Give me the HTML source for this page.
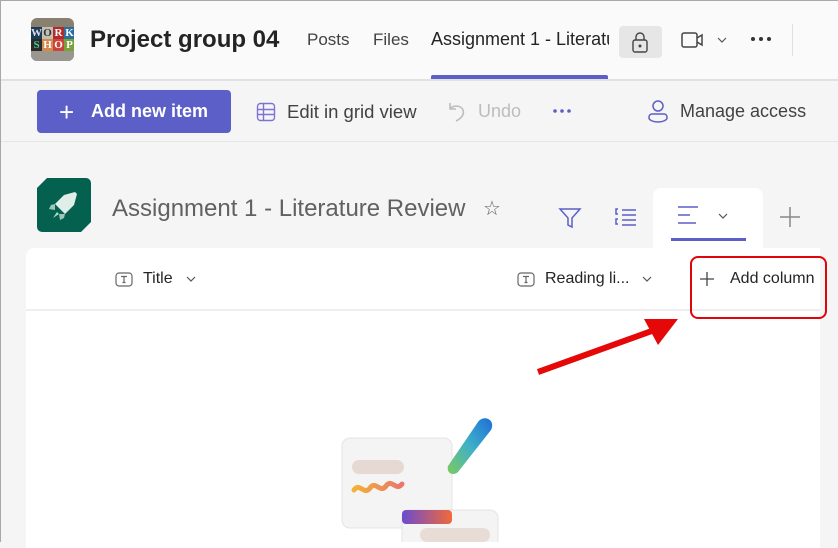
<!DOCTYPE html>
<html><head><meta charset="utf-8"><style>
*{box-sizing:border-box;margin:0;padding:0}
body{width:838px;height:542px;overflow:hidden;background:#f5f5f5;font-family:"Liberation Sans",sans-serif;position:relative;color:#242424}
.frame{position:absolute;inset:0;border:1px solid #a8a8a8;border-right:none;border-bottom:none;pointer-events:none;z-index:10}
.hdr{position:absolute;left:0;top:0;width:838px;height:81px;background:#fafafa;border-bottom:2px solid #e1e1e1}
.abs{position:absolute;white-space:nowrap}
.logo{left:31px;top:18px;width:43px;height:43px;border-radius:6px;overflow:hidden;background:#8a8070}
.logo div{position:absolute;width:11px;height:12px;font:bold 11px "Liberation Serif",serif;text-align:center;line-height:12px}
.tb{top:82px;left:0;width:838px;height:60px;border-bottom:1px solid #e6e6e6;background:#f5f5f5}
.btn{left:37px;top:90px;width:194px;height:43px;background:#5b5fc7;border-radius:4px;color:#fff;font-size:18px;font-weight:bold}
.card{left:26px;top:248px;width:794px;height:300px;background:#fff;border-radius:8px 0 0 0}
</style></head><body>
<div class="hdr"></div>
<div class="abs logo">
<div style="left:0;top:9px;background:#1c3b55;color:#dde">W</div>
<div style="left:11px;top:9px;background:#c3bfb5;color:#333">O</div>
<div style="left:22px;top:9px;background:#b22a2a;color:#fff">R</div>
<div style="left:33px;top:9px;background:#2a6fa0;color:#fff">K</div>
<div style="left:0;top:21px;background:#2a2a2a;color:#4c9">S</div>
<div style="left:11px;top:21px;background:#d5894a;color:#fff">H</div>
<div style="left:22px;top:21px;background:#c9443a;color:#fff">O</div>
<div style="left:33px;top:21px;background:#7aa23a;color:#fff">P</div>
<div style="left:0;top:33px;width:43px;height:10px;background:#9a9690"></div>
</div>
<div class="abs" style="left:90px;top:26px;font-size:24px;font-weight:bold;color:#242424">Project group 04</div>
<div class="abs" style="left:307px;top:30px;font-size:17px;color:#424242">Posts</div>
<div class="abs" style="left:373px;top:30px;font-size:17px;color:#424242">Files</div>
<div class="abs" style="left:431px;top:29px;font-size:18px;color:#242424;width:178px;overflow:hidden">Assignment 1 - Literature</div>
<div class="abs" style="left:431px;top:75px;width:177px;height:4px;background:#5b5fc7;border-radius:2px 2px 0 0"></div>
<div class="abs" style="left:619px;top:26px;width:43px;height:32px;background:#e6e6e6;border-radius:4px"></div>
<svg class="abs" style="left:628px;top:30px" width="24" height="24" viewBox="0 0 24 24" fill="none" stroke="#444" stroke-width="1.4"><rect x="5" y="10" width="14" height="12" rx="2"/><path d="M8 10V7a4 4 0 0 1 8 0v3"/><circle cx="12" cy="16" r=".8" fill="#444"/></svg>
<svg class="abs" style="left:680px;top:30px" width="26" height="20" viewBox="0 0 26 20" fill="none" stroke="#444" stroke-width="1.5"><rect x="2" y="3" width="15" height="14" rx="2"/><path d="M17 8l5-3v10l-5-3"/></svg>
<svg class="abs" style="left:716px;top:36px" width="12" height="8" viewBox="0 0 12 8" fill="none" stroke="#555" stroke-width="1.2"><path d="M2 2l4 4 4-4"/></svg>
<svg class="abs" style="left:750px;top:36px" width="22" height="6" viewBox="0 0 22 6" fill="#333"><circle cx="3" cy="3" r="2"/><circle cx="11" cy="3" r="2"/><circle cx="19" cy="3" r="2"/></svg>
<div class="abs" style="left:792px;top:24px;width:1px;height:32px;background:#e0e0e0"></div>

<div class="abs tb"></div>
<div class="abs btn"><span style="position:absolute;left:22px;top:7px;font-size:26px;font-weight:normal">+</span><span style="position:absolute;left:54px;top:11px">Add new item</span></div>
<svg class="abs" style="left:256px;top:102px" width="20" height="20" viewBox="0 0 20 20" fill="none" stroke="#7f72d6" stroke-width="1.4"><rect x="1.5" y="1.5" width="17" height="17" rx="3"/><path d="M1.5 7.5h17M1.5 12.5h17M7.5 1.5v17"/></svg>
<div class="abs" style="left:287px;top:101px;font-size:18.5px;color:#424242">Edit in grid view</div>
<svg class="abs" style="left:446px;top:100px" width="22" height="24" viewBox="0 0 22 24" fill="none" stroke="#bdbdbd" stroke-width="1.6"><path d="M4 3v6h6"/><path d="M4 9c3-4 11-4 13 1s-3 9-7 11"/></svg>
<div class="abs" style="left:478px;top:101px;font-size:18px;color:#bdbdbd">Undo</div>
<svg class="abs" style="left:552px;top:108px" width="20" height="6" viewBox="0 0 20 6" fill="#5b5fc7"><circle cx="3" cy="3" r="1.8"/><circle cx="10" cy="3" r="1.8"/><circle cx="17" cy="3" r="1.8"/></svg>
<svg class="abs" style="left:647px;top:99px" width="22" height="25" viewBox="0 0 22 25" fill="none" stroke="#5b5fc7" stroke-width="1.5"><circle cx="11" cy="7" r="5"/><path d="M2 18a3 3 0 0 1 3-3h12a3 3 0 0 1 3 3v1c0 2-4 4-9 4s-9-2-9-4z"/></svg>
<div class="abs" style="left:680px;top:101px;font-size:18px;color:#424242">Manage access</div>

<svg class="abs" style="left:37px;top:178px" width="54" height="54" viewBox="0 0 54 54"><path d="M10 0h39a5 5 0 0 1 5 5v39l-10 10H5a5 5 0 0 1-5-5V10z" fill="#05614f"/><path d="M38 14l-11 3-9 9 10 10 9-9 3-11z" fill="#dfeee8"/><path d="M18 26l-4 1-2 4 6 1zM28 36l-1 4-4 2-1-6z" fill="#9cc7b9"/><path d="M20 34l-4 6 6-4z" fill="#b5d6cb"/></svg>
<div class="abs" style="left:112px;top:195px;font-size:24px;color:#616161">Assignment 1 - Literature Review</div>
<div class="abs" style="left:483px;top:196px;font-size:20px;color:#616161">☆</div>
<svg class="abs" style="left:558px;top:207px" width="24" height="22" viewBox="0 0 24 22" fill="none" stroke="#5b5fc7" stroke-width="1.5"><path d="M2 2h20l-8 9v9l-4-2v-7z"/></svg>
<svg class="abs" style="left:615px;top:207px" width="22" height="20" viewBox="0 0 22 20" fill="none" stroke="#5b5fc7" stroke-width="1.5"><path d="M3 2H1v5h2M3 12H1v5h2M7 3h14M7 8h14M7 13h14M7 18h14"/></svg>
<div class="abs" style="left:653px;top:188px;width:110px;height:62px;background:#fff;border-radius:8px 8px 0 0"></div>
<svg class="abs" style="left:677px;top:205px" width="24" height="20" viewBox="0 0 24 20" fill="none" stroke="#5b5fc7" stroke-width="1.5"><path d="M1 2h20M1 10h12M1 18h18"/></svg>
<svg class="abs" style="left:717px;top:212px" width="12" height="8" viewBox="0 0 12 8" fill="none" stroke="#555" stroke-width="1.2"><path d="M2 2l4 4 4-4"/></svg>
<div class="abs" style="left:671px;top:238px;width:75px;height:3px;background:#5b5fc7"></div>
<svg class="abs" style="left:779px;top:206px" width="22" height="22" viewBox="0 0 22 22" stroke="#888" stroke-width="1.5"><path d="M11 1v20M1 11h20"/></svg>

<div class="abs card"></div>
<div class="abs" style="left:26px;top:309px;width:794px;height:2px;background:#eeeeee"></div>
<svg class="abs" style="left:115px;top:272px" width="18" height="15" viewBox="0 0 18 15" fill="none" stroke="#666" stroke-width="1.2"><rect x="1" y="1" width="16" height="13" rx="3"/><path d="M6 4.5h6M9 4.5v6M7.5 10.5h3"/></svg>
<div class="abs" style="left:143px;top:270px;font-size:16px;color:#242424">Title</div>
<svg class="abs" style="left:185px;top:275px" width="12" height="8" viewBox="0 0 12 8" fill="none" stroke="#555" stroke-width="1.2"><path d="M2 2l4 4 4-4"/></svg>
<svg class="abs" style="left:517px;top:272px" width="18" height="15" viewBox="0 0 18 15" fill="none" stroke="#666" stroke-width="1.2"><rect x="1" y="1" width="16" height="13" rx="3"/><path d="M6 4.5h6M9 4.5v6M7.5 10.5h3"/></svg>
<div class="abs" style="left:545px;top:270px;font-size:16px;color:#242424">Reading li...</div>
<svg class="abs" style="left:641px;top:275px" width="12" height="8" viewBox="0 0 12 8" fill="none" stroke="#555" stroke-width="1.2"><path d="M2 2l4 4 4-4"/></svg>
<svg class="abs" style="left:700px;top:272px" width="14" height="14" viewBox="0 0 14 14" stroke="#444" stroke-width="1.3"><path d="M7 0v14M0 7h14"/></svg>
<div class="abs" style="left:730px;top:270px;font-size:16px;color:#242424">Add column</div>
<div class="abs" style="left:690px;top:256px;width:137px;height:63px;border:2.5px solid #e0040b;border-radius:8px"></div>

<svg class="abs" style="left:530px;top:310px" width="160" height="70" viewBox="0 0 160 70"><path d="M8 62L130 18" stroke="#e50808" stroke-width="6"/><path d="M148 9L114 9L128 35z" fill="#e50808"/></svg>

<svg class="abs" style="left:330px;top:410px" width="180" height="132" viewBox="0 0 180 132">
<defs><linearGradient id="p" x1="0" y1="1" x2="1" y2="0"><stop offset="0" stop-color="#7ccb5e"/><stop offset=".5" stop-color="#3fb0c8"/><stop offset="1" stop-color="#1d6fd8"/></linearGradient>
<linearGradient id="w" x1="0" x2="1"><stop offset="0" stop-color="#f2b234"/><stop offset="1" stop-color="#e8776e"/></linearGradient>
<linearGradient id="c" x1="0" x2="1"><stop offset="0" stop-color="#6b4bd0"/><stop offset="1" stop-color="#f06a3a"/></linearGradient></defs>
<rect x="12" y="28" width="110" height="90" rx="8" fill="#f4f4f4" stroke="#e4e4e4"/>
<rect x="72" y="100" width="96" height="40" rx="8" fill="#f4f4f4" stroke="#e4e4e4"/>
<rect x="72" y="100" width="50" height="14" rx="4" fill="url(#c)"/>
<rect x="90" y="118" width="70" height="14" rx="7" fill="#e8dcd6"/>
<rect x="22" y="50" width="52" height="14" rx="7" fill="#e6d9d3"/>
<path d="M24 80c6-8 10 6 16-2s10 6 16-2 10 6 16-2" stroke="url(#w)" stroke-width="5" fill="none" stroke-linecap="round"/>
<path d="M118 56L148 12c6-8 18-2 13 8L128 62c-4 4-12 2-10-6z" fill="url(#p)"/>
</svg>
<div class="frame"></div>
</body></html>
